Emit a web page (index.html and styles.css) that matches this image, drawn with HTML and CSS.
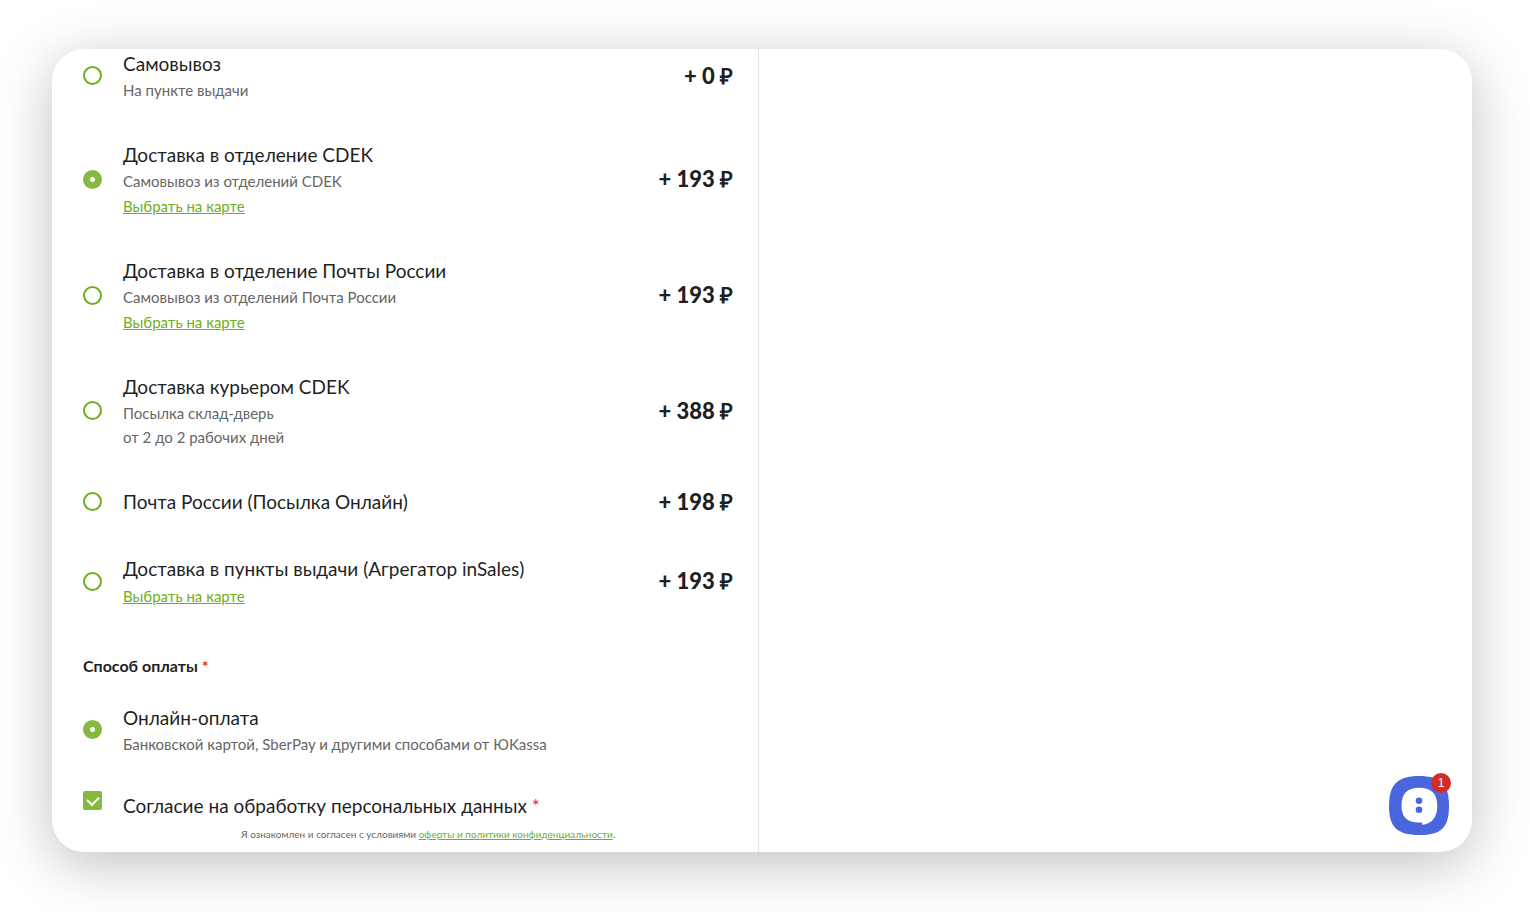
FILE: index.html
```
<!DOCTYPE html>
<html lang="ru">
<head>
  <meta charset="UTF-8">
  <meta name="viewport" content="width=device-width, initial-scale=1.0">
  <title>Оформление заказа</title>
  <link rel="stylesheet" href="styles.css">
</head>
<body>
  <div class="checkout">
    <form class="checkout-form">

      <!-- Delivery -->
      <div class="options">
        <div class="option">
          <input type="radio" name="delivery" id="pickup">
          <div class="option-text">
            <label for="pickup">Самовывоз</label>
            <p>На пункте выдачи</p>
          </div>
          <div class="price">+ 0 ₽</div>
        </div>
        <div class="option">
          <input type="radio" name="delivery" id="cdek" checked>
          <div class="option-text">
            <label for="cdek">Доставка в отделение CDEK</label>
            <p>Самовывоз из отделений CDEK</p>
            <a class="map-link" href="#">Выбрать на карте</a>
          </div>
          <div class="price">+ 193 ₽</div>
        </div>
        <div class="option">
          <input type="radio" name="delivery" id="post">
          <div class="option-text">
            <label for="post">Доставка в отделение Почты России</label>
            <p>Самовывоз из отделений Почта России</p>
            <a class="map-link" href="#">Выбрать на карте</a>
          </div>
          <div class="price">+ 193 ₽</div>
        </div>
        <div class="option">
          <input type="radio" name="delivery" id="courier">
          <div class="option-text">
            <label for="courier">Доставка курьером CDEK</label>
            <p>Посылка склад-дверь</p>
            <p>от 2 до 2 рабочих дней</p>
          </div>
          <div class="price">+ 388 ₽</div>
        </div>
        <div class="option">
          <input type="radio" name="delivery" id="online-parcel">
          <div class="option-text">
            <label for="online-parcel">Почта России (Посылка Онлайн)</label>
          </div>
          <div class="price">+ 198 ₽</div>
        </div>
        <div class="option">
          <input type="radio" name="delivery" id="insales">
          <div class="option-text">
            <label for="insales">Доставка в пункты выдачи (Агрегатор inSales)</label>
            <a class="map-link" href="#">Выбрать на карте</a>
          </div>
          <div class="price">+ 193 ₽</div>
        </div>
      </div>

      <!-- Payment -->
      <h2>Способ оплаты <span class="required">*</span></h2>
      <div class="option">
        <input type="radio" name="payment" id="online-pay" checked>
        <div class="option-text">
          <label for="online-pay">Онлайн-оплата</label>
          <p>Банковской картой, SberPay и другими способами от ЮKassa</p>
        </div>
      </div>

      <!-- Consent -->
      <div class="option consent">
        <input type="checkbox" id="agree" checked>
        <div class="option-text">
          <label for="agree">Согласие на обработку персональных данных <span class="required">*</span></label>
          <p class="terms">Я ознакомлен и согласен с условиями <a href="#">оферты и политики конфиденциальности</a>.</p>
        </div>
      </div>
    </form>

    <aside class="summary"></aside>

    <button class="chat" type="button" aria-label="Чат">
      <svg width="60" height="60" viewBox="0 0 60 60">
        <path fill="#4a66df" d="M30 0C52 0 60 8 60 30S52 59 30 59 0 51 0 30 8 0 30 0z"/>
        <path fill="#fff" d="M30 11.700C43 11.700 48.300 18 48.300 30C48.300 41 43 48 33 48.700V46.500H30C18 46.500 12.500 41 12.500 29.500S18 11.700 30 11.700z"/>
        <circle fill="#4a66df" cx="30" cy="24.700" r="3.300"/>
        <circle fill="#4a66df" cx="30" cy="33.700" r="3.300"/>
      </svg>
      <span class="badge">1</span>
    </button>
  </div>
</body>
</html>
```
FILE: styles.css
```
* {
  box-sizing: border-box;
}
body {
  margin: 0;
  padding: 49px 58px 60px 52px;
  background: #fff;
  color: #1f1f1f;
  font-family: Lato, "Open Sans", sans-serif;
}
h2, p {
  margin: 0;
}
a {
  color: #6cb01b;
}
.checkout {
  position: relative;
  display: grid;
  grid-template-columns: 707fr 713fr;
  background: #fff;
  border-radius: 32px;
  box-shadow: 0 12px 56px rgba(0, 0, 0, 0.25);
}
.checkout-form {
  padding: 0 25px 10px 31px;
  border-right: 1px solid #e2e2e2;
}
.options {
  display: flex;
  flex-direction: column;
  gap: 38px;
}
.option {
  display: flex;
  align-items: center;
}
.option-text {
  flex: 1;
  display: flex;
  flex-direction: column;
  align-items: flex-start;
  font-size: 15px;
  line-height: 24px;
}
.option-text label {
  font-size: 19px;
  line-height: 29px;
}
.option-text p {
  color: #666;
}
.map-link {
  margin-top: 1px;
}
.price {
  font-size: 22px;
  font-weight: 900;
  line-height: 28px;
}
input {
  appearance: none;
  flex: none;
  width: 19px;
  height: 19px;
  margin: 0 21px 0 0;
}
input[type="radio"] {
  border: 2px solid #6cb01b;
  border-radius: 50%;
}
input[type="radio"]:checked {
  border-color: #86b93f;
  background: #86b93f radial-gradient(circle, #fff 2px, #86b93f 3px);
}
input[type="checkbox"] {
  display: grid;
  place-items: center;
  border-radius: 2px;
  background: #86b93f;
}
input[type="checkbox"]:checked::before {
  content: "";
  width: 6px;
  height: 9px;
  margin-bottom: 3px;
  border: solid #fff;
  border-width: 0 2px 2px 0;
  transform: rotate(45deg);
}
h2 {
  margin: 46px 0 25px;
  font-size: 16px;
  font-weight: 700;
  line-height: 24px;
}
.required {
  color: #f02a20;
}
.consent {
  align-items: flex-start;
  margin-top: 35px;
}
.option-text .terms {
  align-self: center;
  margin-top: 6px;
  font-size: 10px;
  line-height: 16px;
}
.chat {
  position: absolute;
  right: 23px;
  bottom: 16px;
  width: 60px;
  height: 60px;
  padding: 0;
  border: 0;
  background: none;
}
.chat svg {
  display: block;
}
.badge {
  position: absolute;
  top: -3px;
  right: -2px;
  width: 20px;
  height: 20px;
  border-radius: 50%;
  background: #d32b27;
  color: #fff;
  font-family: "Liberation Sans", sans-serif;
  font-size: 12px;
  line-height: 20px;
  text-align: center;
}
```
